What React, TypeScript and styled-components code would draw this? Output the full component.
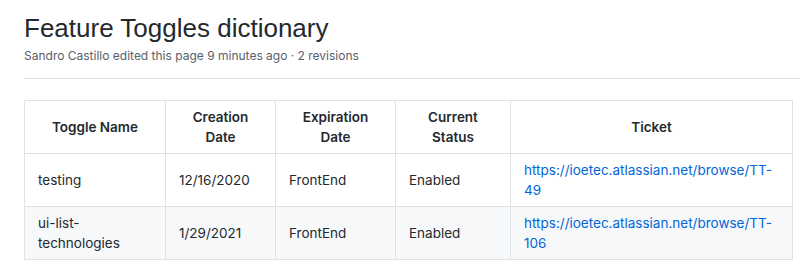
import React from "react";
import styled, { createGlobalStyle } from "styled-components";

const Global = createGlobalStyle`
  html, body { margin: 0; padding: 0; background: #ffffff; }
  body { font-family: Inter, "Liberation Sans", Arial, sans-serif; color: #24292e; }
`;

const Page = styled.div`
  padding: 12px 0 0 24px;
`;

const Header = styled.header`
  padding-bottom: 13px;
  border-bottom: 1px solid #e1e4e8;
  margin-bottom: 21px;
`;

const Title = styled.h1`
  margin: 0;
  font-family: "Liberation Sans", Arial, sans-serif;
  font-size: 26px;
  line-height: 32px;
  font-weight: 400;
  color: #24292e;
`;

const Meta = styled.div`
  margin-top: 3px;
  font-size: 12px;
  line-height: 18px;
  color: #586069;
`;

const Table = styled.table`
  border-collapse: collapse;
  width: 768px;
  table-layout: fixed;
  font-size: 13.5px;
  line-height: 20px;
`;

const Row = styled.tr<{ $striped?: boolean }>`
  background: ${(p) => (p.$striped ? "#f6f8fa" : "#ffffff")};
`;

const Th = styled.th<{ $w: number }>`
  width: ${(p) => p.$w}px;
  box-sizing: border-box;
  padding: 6px 13px;
  border: 1px solid #dfe2e5;
  font-weight: 600;
  text-align: center;
  color: #24292e;
`;

const Td = styled.td`
  padding: 6px 13px;
  border: 1px solid #dfe2e5;
  color: #24292e;
  vertical-align: middle;
`;

const Link = styled.a`
  color: #0366d6;
  text-decoration: none;
`;

const columns = [
  { label: "Toggle Name", w: 141 },
  { label: "Creation Date", w: 110 },
  { label: "Expiration Date", w: 120 },
  { label: "Current Status", w: 115 },
  { label: "Ticket", w: 282 },
];

const rows = [
  {
    name: "testing",
    created: "12/16/2020",
    exp: "FrontEnd",
    status: "Enabled",
    ticket: "https://ioetec.atlassian.net/browse/TT-49",
  },
  {
    name: "ui-list-technologies",
    created: "1/29/2021",
    exp: "FrontEnd",
    status: "Enabled",
    ticket: "https://ioetec.atlassian.net/browse/TT-106",
  },
];

export default function App() {
  return (
    <>
      <Global />
      <Page>
        <Header>
          <Title>Feature Toggles dictionary</Title>
          <Meta>Sandro Castillo edited this page 9 minutes ago · 2 revisions</Meta>
        </Header>
        <Table>
          <thead>
            <Row>
              {columns.map((c) => (
                <Th key={c.label} $w={c.w}>
                  {c.label}
                </Th>
              ))}
            </Row>
          </thead>
          <tbody>
            {rows.map((r, i) => (
              <Row key={r.name} $striped={i % 2 === 1}>
                <Td>{r.name}</Td>
                <Td>{r.created}</Td>
                <Td>{r.exp}</Td>
                <Td>{r.status}</Td>
                <Td>
                  <Link href="#">{r.ticket}</Link>
                </Td>
              </Row>
            ))}
          </tbody>
        </Table>
      </Page>
    </>
  );
}
